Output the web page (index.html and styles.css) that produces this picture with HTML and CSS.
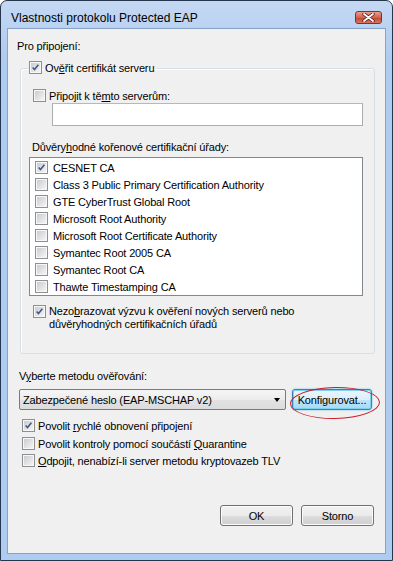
FILE: index.html
```html
<!DOCTYPE html>
<html lang="cs">
<head>
  <meta charset="UTF-8" />
  <title>Vlastnosti protokolu Protected EAP</title>
  <link rel="stylesheet" href="styles.css">
</head>
<body>
  <div class="window">
    <div class="titlebar">
      <span class="title">Vlastnosti protokolu Protected EAP</span>
      <span class="close">
        <svg width="13" height="9" viewBox="0 0 13 9"><path d="M2 1 L11 8 M11 1 L2 8" stroke="#5a1a1a" stroke-width="3.4" stroke-linecap="round"/><path d="M2 1 L11 8 M11 1 L2 8" stroke="#fff" stroke-width="1.8" stroke-linecap="round"/></svg>
      </span>
    </div>

    <div class="client">
      <div class="top-label">Pro připojení:</div>

      <fieldset class="group">
        <legend>
          <label class="check">
            <span class="box"><svg width="11" height="11" viewBox="0 0 11 11"><path d="M2 5.5 L4.3 8 L9 2.2" fill="none" stroke="#44577f" stroke-width="1.9"/></svg></span>
            <span>Ov<u>ě</u>řit certifikát serveru</span>
          </label>
        </legend>

        <label class="check servers">
          <span class="box"></span>
          <span>Připojit k tě<u>m</u>to serverům:</span>
        </label>
        <div class="textbox"></div>

        <div class="ca-label">Důvěry<u>h</u>odné kořenové certifikační úřady:</div>
        <div class="listbox">
          <div class="list-row"><span class="box"><svg width="11" height="11" viewBox="0 0 11 11"><path d="M2 5.5 L4.3 8 L9 2.2" fill="none" stroke="#44577f" stroke-width="1.9"/></svg></span>CESNET CA</div>
          <div class="list-row"><span class="box"></span>Class 3 Public Primary Certification Authority</div>
          <div class="list-row"><span class="box"></span>GTE CyberTrust Global Root</div>
          <div class="list-row"><span class="box"></span>Microsoft Root Authority</div>
          <div class="list-row"><span class="box"></span>Microsoft Root Certificate Authority</div>
          <div class="list-row"><span class="box"></span>Symantec Root 2005 CA</div>
          <div class="list-row"><span class="box"></span>Symantec Root CA</div>
          <div class="list-row"><span class="box"></span>Thawte Timestamping CA</div>
        </div>

        <label class="check prompt">
          <span class="box"><svg width="11" height="11" viewBox="0 0 11 11"><path d="M2 5.5 L4.3 8 L9 2.2" fill="none" stroke="#44577f" stroke-width="1.9"/></svg></span>
          <span>Nezo<u>b</u>razovat výzvu k ověření nových serverů nebo<br>důvěryhodných certifikačních úřadů</span>
        </label>
      </fieldset>

      <div class="method-label">V<u>y</u>berte metodu ověřování:</div>
      <div class="method-row">
        <div class="combo">
          <span>Zabezpečené heslo (EAP-MSCHAP v2)</span>
          <span class="arrow"></span>
        </div>
        <div class="config-wrap">
          <button class="btn btn-hot">Konfigurovat...</button>
          <span class="ring"></span>
        </div>
      </div>

      <div class="options">
        <label class="check">
          <span class="box"><svg width="11" height="11" viewBox="0 0 11 11"><path d="M2 5.5 L4.3 8 L9 2.2" fill="none" stroke="#44577f" stroke-width="1.9"/></svg></span>
          <span>Povolit <u>r</u>ychlé obnovení připojení</span>
        </label>
        <label class="check">
          <span class="box"></span>
          <span>Povolit kontroly pomocí součástí <u>Q</u>uarantine</span>
        </label>
        <label class="check">
          <span class="box"></span>
          <span><u>O</u>dpojit, nenabízí-li server metodu kryptovazeb TLV</span>
        </label>
      </div>

      <div class="actions">
        <button class="btn">OK</button>
        <button class="btn">Storno</button>
      </div>
    </div>
  </div>
</body>
</html>
```

FILE: styles.css
```css
* {
  box-sizing: border-box;
}

body {
  margin: 0;
  font-family: 'Liberation Sans', Arial, sans-serif;
  font-size: 11px;
  letter-spacing: -0.15px;
  color: #000;
  background: #fff;
}

.window {
  width: 393px;
  height: 561px;
  display: flex;
  flex-direction: column;
  border: 1px solid #26364c;
  border-radius: 7px 7px 0 0;
  background: linear-gradient(#c4d8f3, #aecbf0 60px);
  padding: 0 6px 6px;
}

.titlebar {
  height: 27px;
  display: flex;
  align-items: center;
  justify-content: space-between;
  padding: 6px 4px 0 4px;
}

.title {
  font-size: 12px;
  letter-spacing: 0;
}

.close {
  width: 27px;
  height: 13px;
  display: flex;
  align-items: center;
  justify-content: center;
  border: 1px solid #7a3232;
  border-radius: 3px;
  background: linear-gradient(#e8a08e, #d2604c 50%, #c0432e 51%, #d77a62);
}

.client {
  flex: 1;
  display: flex;
  flex-direction: column;
  background: #f0f0f0;
  border: 1px solid #89a3c6;
}

.top-label {
  margin: 10px 0 0 9px;
  line-height: 14px;
}

.group {
  margin: 8px 10px 0 12px;
  padding: 0 11px 22px 8px;
  border: 1px solid #d5dfe5;
  border-radius: 3px;
  box-shadow: inset 1px 1px 0 #fff;
}

legend {
  padding: 0 3px 0 0;
}

.check {
  display: flex;
  align-items: flex-start;
  gap: 3px;
  line-height: 14px;
}

.box {
  width: 13px;
  height: 13px;
  flex: none;
  display: flex;
  align-items: center;
  justify-content: center;
  border: 1px solid #8e8f8f;
  padding: 1px;
  background: linear-gradient(135deg, #c9ccd2, #f4f4f4) content-box, linear-gradient(#f7f7f7, #f7f7f7);
}

.servers {
  margin: 14px 0 0 4px;
}

.textbox {
  height: 23px;
  margin-left: 23px;
  background: #fff;
  border: 1px solid #abadb3;
  border-top-color: #b5b8bf;
}

.ca-label {
  margin: 14px 0 0 3px;
  line-height: 14px;
}

.listbox {
  margin-top: 3px;
  height: 139px;
  background: #fff;
  border: 1px solid #828790;
  padding: 1px 0 0 5px;
}

.list-row {
  height: 17px;
  display: flex;
  align-items: center;
  gap: 5px;
}

.prompt {
  margin: 9px 0 0 4px;
  line-height: 13px;
}

.method-label {
  margin: 15px 0 0 11px;
  line-height: 14px;
}

.method-row {
  display: flex;
  margin: 6px 0 0 11px;
  height: 21px;
}

.combo {
  width: 267px;
  display: flex;
  align-items: center;
  justify-content: space-between;
  padding: 0 5px 0 3px;
  border: 1px solid #7a7a7a;
  border-radius: 2px;
  background: linear-gradient(#f6f6f6, #ececec 50%, #e2e2e2 51%, #dcdcdc);
}

.arrow {
  width: 0;
  height: 0;
  border-left: 3.5px solid transparent;
  border-right: 3.5px solid transparent;
  border-top: 4px solid #000;
}

.config-wrap {
  position: relative;
  margin-left: 6px;
}

.btn {
  font-family: inherit;
  font-size: 11px;
  letter-spacing: -0.15px;
  color: #000;
  height: 21px;
  width: 73px;
  padding: 0;
  border: 1px solid #707070;
  border-radius: 3px;
  background: linear-gradient(#f2f2f2, #ebebeb 50%, #dddddd 51%, #cfcfcf);
  box-shadow: inset 0 0 0 1px #fbfbfb;
}

.btn-hot {
  width: 80px;
  border-color: #3c7fb1;
  background: linear-gradient(#eaf6fd, #d9f0fc 50%, #bee6fd 51%, #a7d9f5);
  box-shadow: inset 0 0 0 1px #7fd0f0, 0 0 2px #4fc2ee;
}

/* red hand-drawn highlight around the button */
.ring {
  position: absolute;
  left: -2px;
  top: -2px;
  width: 90px;
  height: 32px;
  border: 1px solid #d11a2a;
  border-radius: 50%;
  transform: rotate(-1deg);
}

.options {
  display: flex;
  flex-direction: column;
  gap: 3.5px;
  margin: 9px 0 0 14px;
}

.actions {
  margin-top: auto;
  display: flex;
  justify-content: flex-end;
  gap: 8px;
  padding: 0 11px 27px 0;
}
```
